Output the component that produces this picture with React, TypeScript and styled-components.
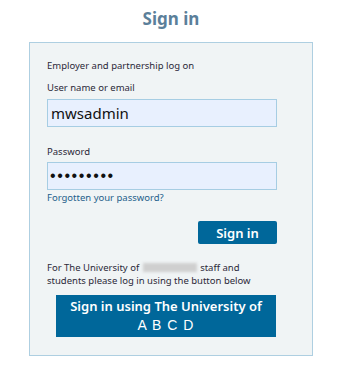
import React from "react";
import styled, { createGlobalStyle } from "styled-components";

const Global = createGlobalStyle`
  html, body { margin: 0; padding: 0; background: #ffffff; }
  body { font-family: "Noto Sans", "DejaVu Sans", sans-serif; }
`;

const Page = styled.div`
  width: 358px;
  height: 373px;
  display: flex;
  flex-direction: column;
  padding-left: 29px;
  box-sizing: border-box;
`;

const Title = styled.h1`
  margin: 6px 0 0 0;
  width: 284px;
  text-align: center;
  font-size: 17px;
  line-height: 26px;
  font-weight: 700;
  color: #5b7f9a;
`;

const Panel = styled.div`
  margin-top: 10px;
  width: 284px;
  height: 314px;
  box-sizing: border-box;
  background: #f0f4f5;
  border: 1px solid #aecfe1;
  padding: 16px 0 0 17px;
  display: flex;
  flex-direction: column;
`;

const Text = styled.div<{ $mt?: number }>`
  font-size: 9.5px;
  line-height: 13px;
  color: #2b2838;
  margin-top: ${(p) => p.$mt ?? 0}px;
`;

const Input = styled.div<{ $mt?: number; $dots?: boolean }>`
  margin-top: ${(p) => p.$mt ?? 0}px;
  width: 230px;
  height: 28px;
  box-sizing: border-box;
  background: #e8f0fe;
  border: 1px solid #a6cde3;
  display: flex;
  align-items: center;
  padding-left: ${(p) => (p.$dots ? "2px" : "3px")};
  font-family: ${(p) => (p.$dots ? '"Liberation Sans", Arial, sans-serif' : "inherit")};
  font-size: ${(p) => (p.$dots ? "16px" : "15px")};
  letter-spacing: ${(p) => (p.$dots ? "1.6px" : "0")};
  color: #111;
`;

const Link = styled.a`
  font-size: 9.5px;
  line-height: 13px;
  color: #1f5f8b;
  text-decoration: none;
  margin-top: 1px;
`;

const Row = styled.div`
  display: flex;
  justify-content: flex-end;
  width: 230px;
  margin-top: 17px;
`;

const SmallButton = styled.button`
  width: 79px;
  height: 23px;
  border: none;
  border-radius: 2px;
  background: #00679a;
  color: #fff;
  font-family: inherit;
  font-size: 13px;
  font-weight: 600;
  padding: 0;
`;

const Blur = styled.span`
  display: inline-block;
  width: 54px;
  height: 9px;
  vertical-align: -1px;
  margin: 0 1px;
  background: #cfcfcf;
  filter: blur(1.4px);
`;

const BigButton = styled.button`
  margin: 8px 0 0 9px;
  width: 220px;
  height: 42px;
  border: none;
  background: #00679a;
  color: #fff;
  font-family: inherit;
  padding: 0;
  display: flex;
  flex-direction: column;
  align-items: center;
  justify-content: center;
`;

const BigLine = styled.span`
  font-size: 13px;
  font-weight: 600;
  line-height: 19px;
`;

const Letters = styled.span`
  font-family: "Liberation Sans", Arial, sans-serif;
  font-size: 14px;
  line-height: 19px;
  letter-spacing: 1px;
`;

export default function App() {
  return (
    <>
      <Global />
      <Page>
        <Title>Sign in</Title>
        <Panel>
          <Text>Employer and partnership log on</Text>
          <Text $mt={9}>User name or email</Text>
          <Input $mt={5}>mwsadmin</Input>
          <Text $mt={18}>Password</Text>
          <Input $mt={4} $dots>•••••••••</Input>
          <Link href="#">Forgotten your password?</Link>
          <Row>
            <SmallButton>Sign in</SmallButton>
          </Row>
          <Text $mt={17}>
            For The University of <Blur aria-hidden /> staff and
            <br />
            students please log in using the button below
          </Text>
          <BigButton>
            <BigLine>Sign in using The University of</BigLine>
            <Letters>A B C D</Letters>
          </BigButton>
        </Panel>
      </Page>
    </>
  );
}
